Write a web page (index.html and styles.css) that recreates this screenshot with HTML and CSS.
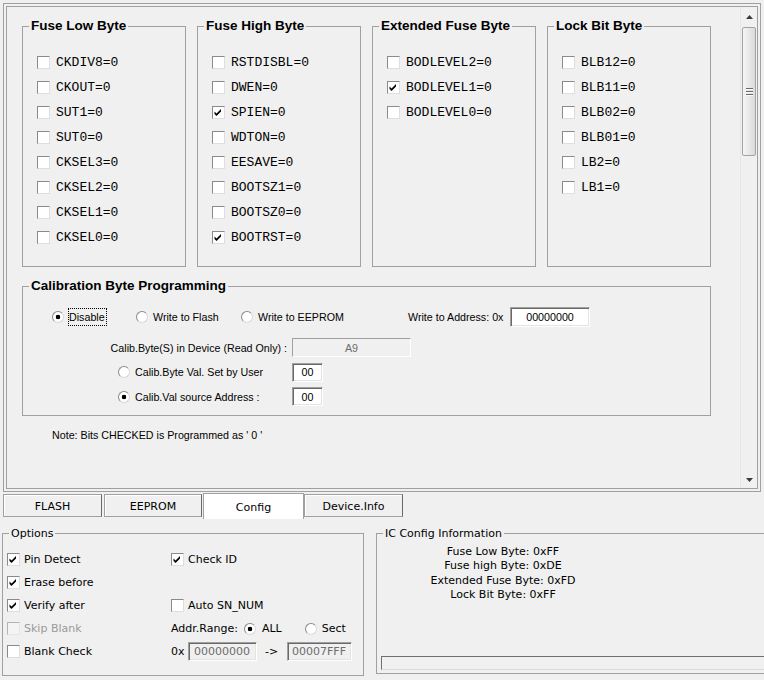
FILE: index.html
```html
<!DOCTYPE html>
<html>
<head>
<meta charset="utf-8">
<title>Config</title>
<link rel="stylesheet" href="styles.css">
</head>
<body>
<div class="frame">
  <div class="pane">
    <div class="fuses">
      <fieldset class="grp">
        <legend>Fuse Low Byte</legend>
        <div class="bit"><span class="cb"></span>CKDIV8=0</div>
        <div class="bit"><span class="cb"></span>CKOUT=0</div>
        <div class="bit"><span class="cb"></span>SUT1=0</div>
        <div class="bit"><span class="cb"></span>SUT0=0</div>
        <div class="bit"><span class="cb"></span>CKSEL3=0</div>
        <div class="bit"><span class="cb"></span>CKSEL2=0</div>
        <div class="bit"><span class="cb"></span>CKSEL1=0</div>
        <div class="bit"><span class="cb"></span>CKSEL0=0</div>
      </fieldset>
      <fieldset class="grp">
        <legend>Fuse High Byte</legend>
        <div class="bit"><span class="cb"></span>RSTDISBL=0</div>
        <div class="bit"><span class="cb"></span>DWEN=0</div>
        <div class="bit"><span class="cb"><svg class="tick" viewBox="0 0 11 11" width="11" height="11"><path d="M1.5 4.5 L3.5 6.5 L8 2 V4.5 L3.5 9 L1.5 7 Z"/></svg></span>SPIEN=0</div>
        <div class="bit"><span class="cb"></span>WDTON=0</div>
        <div class="bit"><span class="cb"></span>EESAVE=0</div>
        <div class="bit"><span class="cb"></span>BOOTSZ1=0</div>
        <div class="bit"><span class="cb"></span>BOOTSZ0=0</div>
        <div class="bit"><span class="cb"><svg class="tick" viewBox="0 0 11 11" width="11" height="11"><path d="M1.5 4.5 L3.5 6.5 L8 2 V4.5 L3.5 9 L1.5 7 Z"/></svg></span>BOOTRST=0</div>
      </fieldset>
      <fieldset class="grp">
        <legend>Extended Fuse Byte</legend>
        <div class="bit"><span class="cb"></span>BODLEVEL2=0</div>
        <div class="bit"><span class="cb"><svg class="tick" viewBox="0 0 11 11" width="11" height="11"><path d="M1.5 4.5 L3.5 6.5 L8 2 V4.5 L3.5 9 L1.5 7 Z"/></svg></span>BODLEVEL1=0</div>
        <div class="bit"><span class="cb"></span>BODLEVEL0=0</div>
      </fieldset>
      <fieldset class="grp">
        <legend>Lock Bit Byte</legend>
        <div class="bit"><span class="cb"></span>BLB12=0</div>
        <div class="bit"><span class="cb"></span>BLB11=0</div>
        <div class="bit"><span class="cb"></span>BLB02=0</div>
        <div class="bit"><span class="cb"></span>BLB01=0</div>
        <div class="bit"><span class="cb"></span>LB2=0</div>
        <div class="bit"><span class="cb"></span>LB1=0</div>
      </fieldset>
    </div>

    <fieldset class="grp calib">
      <legend>Calibration Byte Programming</legend>
      <div class="crow1">
        <div class="opt w-dis"><span class="rb on"></span><span class="focus">Disable</span></div>
        <div class="opt w-flash"><span class="rb"></span>Write to Flash</div>
        <div class="opt w-eep"><span class="rb"></span>Write to EEPROM</div>
        <span class="addr-lbl">Write to Address: 0x</span>
        <span class="inp addr">00000000</span>
      </div>
      <div class="cgrid">
        <span class="ro-lbl">Calib.Byte(S) in Device (Read Only) :</span>
        <span class="inp ro">A9</span>
        <div class="opt ind"><span class="rb"></span>Calib.Byte Val. Set by User</div>
        <span class="inp small">00</span>
        <div class="opt ind"><span class="rb on"></span>Calib.Val source Address :</div>
        <span class="inp small">00</span>
      </div>
    </fieldset>

    <p class="note">Note: Bits CHECKED is Programmed as ' 0 '</p>
  </div>

  <div class="vscroll">
    <div class="sb-btn up"><svg width="7" height="4" viewBox="0 0 7 4"><path d="M0 4 L3.5 0 L7 4 Z" fill="#3a3a3a"/></svg></div>
    <div class="sb-track">
      <div class="thumb">
        <svg width="7" height="8" viewBox="0 0 7 8"><path d="M0 0.5h7M0 3.5h7M0 6.5h7" stroke="#6a6a6a"/><path d="M0 1.5h7M0 4.5h7M0 7.5h7" stroke="#fafafa"/></svg>
      </div>
    </div>
    <div class="sb-btn down"><svg width="7" height="4" viewBox="0 0 7 4"><path d="M0 0 L7 0 L3.5 4 Z" fill="#3a3a3a"/></svg></div>
  </div>
</div>

<div class="tabs">
  <div class="tab t-flash">FLASH</div>
  <div class="tab t-eep">EEPROM</div>
  <div class="tab t-cfg sel">Config</div>
  <div class="tab t-dev">Device.Info</div>
</div>

<div class="page">
  <fieldset class="box opts">
    <legend>Options</legend>
    <div class="ogrid">
      <div class="ck"><span class="cb"><svg class="tick" viewBox="0 0 11 11" width="11" height="11"><path d="M1.5 4.5 L3.5 6.5 L8 2 V4.5 L3.5 9 L1.5 7 Z"/></svg></span>Pin Detect</div>
      <div class="ck"><span class="cb"><svg class="tick" viewBox="0 0 11 11" width="11" height="11"><path d="M1.5 4.5 L3.5 6.5 L8 2 V4.5 L3.5 9 L1.5 7 Z"/></svg></span>Check ID</div>

      <div class="ck"><span class="cb"><svg class="tick" viewBox="0 0 11 11" width="11" height="11"><path d="M1.5 4.5 L3.5 6.5 L8 2 V4.5 L3.5 9 L1.5 7 Z"/></svg></span>Erase before</div>
      <div></div>

      <div class="ck"><span class="cb"><svg class="tick" viewBox="0 0 11 11" width="11" height="11"><path d="M1.5 4.5 L3.5 6.5 L8 2 V4.5 L3.5 9 L1.5 7 Z"/></svg></span>Verify after</div>
      <div class="ck"><span class="cb"></span>Auto SN_NUM</div>

      <div class="ck dis"><span class="cb"></span>Skip Blank</div>
      <div class="ck">Addr.Range:<span class="rb on r-all"></span>ALL<span class="rb r-sect"></span>Sect</div>

      <div class="ck"><span class="cb"></span>Blank Check</div>
      <div class="ck">0x<span class="inp gin gin1">00000000</span><span class="arrow">-&gt;</span><span class="inp gin gin2">00007FFF</span></div>
    </div>
  </fieldset>

  <fieldset class="box icinfo">
    <legend>IC Config Information</legend>
    <div class="iclines">
      <div>Fuse Low Byte: 0xFF</div>
      <div>Fuse high Byte: 0xDE</div>
      <div>Extended Fuse Byte: 0xFD</div>
      <div>Lock Bit Byte: 0xFF</div>
    </div>
    <div class="progress"></div>
  </fieldset>
</div>
</body>
</html>
```

FILE: styles.css
```css
* { box-sizing: border-box; }

html, body {
  margin: 0;
  padding: 0;
}

body {
  width: 764px;
  height: 680px;
  overflow: hidden;
  background: #f0f0f0;
  font-family: "Liberation Sans", Arial, sans-serif;
  font-size: 11px;
  color: #000;
}

/* ---------- upper scrolling panel ---------- */
.frame {
  margin: 3px 0 0 3px;
  width: 758px;
  height: 489px;
  border: 4px double #a0a0a0;
  display: flex;
}

.pane {
  flex: 1;
  min-width: 0;
  padding: 11px 0 0 15px;
}

.fuses {
  display: grid;
  grid-template-columns: repeat(4, 164px);
  column-gap: 11px;
}

.grp {
  margin: 0;
  padding: 0;
  min-width: 0;
  border: 1px solid #a0a0a0;
}

.grp legend {
  font: bold 13.5px/16px "Liberation Sans", Arial, sans-serif;
  margin-left: 6px;
  padding: 0 2px;
}

.fuses .grp {
  padding: 16px 0 16px 0;
}

.bit {
  height: 25px;
  margin-left: 14px;
  display: flex;
  align-items: center;
  font: 13px "Liberation Mono", "Courier New", monospace;
}

.cb {
  width: 13px;
  height: 13px;
  flex: none;
  display: flex;
  background: #fff;
  border: 1px solid;
  border-color: #8a8a8a #dedede #dedede #8a8a8a;
  margin-right: 6px;
}

.tick { display: block; fill: #000; }

.rb {
  width: 12px;
  height: 12px;
  flex: none;
  border-radius: 50%;
  border: 1px solid;
  border-color: #8a8a8a #d8d8d8 #d8d8d8 #8a8a8a;
  background: #fff;
  margin-right: 5px;
}

.rb.on {
  background: radial-gradient(circle at center, #000 0 2px, #fff 2.6px);
}

/* calibration */
.calib {
  width: 689px;
  margin-top: 11px;
  padding: 13px 0 9px 0;
  font-size: 10.7px;
}

.crow1 {
  display: flex;
  align-items: center;
  height: 20px;
  margin-left: 29px;
}

.opt {
  display: flex;
  align-items: center;
}

.w-dis { width: 84px; }
.w-flash { width: 105px; }
.w-eep { width: 167px; }

.focus {
  border: 1px dotted #000;
  line-height: 16px;
  padding-right: 1px;
  margin-left: -1px;
}

.addr-lbl {
  width: 102px;
  flex: none;
}

.inp {
  display: flex;
  align-items: center;
  justify-content: center;
  background: #fff;
  border: 1px solid;
  border-color: #a0a0a0 #fff #fff #a0a0a0;
  box-shadow: inset 1px 1px 0 #696969, inset -1px -1px 0 #e3e3e3;
}

.addr { width: 80px; height: 20px; }

.cgrid {
  display: grid;
  grid-template-columns: 235px auto;
  grid-auto-rows: 19px;
  column-gap: 5px;
  row-gap: 5.5px;
  margin: 11px 0 0 29px;
  align-items: center;
  justify-items: start;
}

.ro-lbl { justify-self: end; }

.inp.ro {
  width: 119px;
  height: 19px;
  background: #f0f0f0;
  color: #6d6d6d;
  box-shadow: none;
  border-color: #a0a0a0 #fff #fff #a0a0a0;
}

.inp.small { width: 31px; height: 19px; }

.ind { margin-left: 66px; }

.note {
  margin: 13px 0 0 30px;
  line-height: 13px;
  font-size: 10.7px;
}

/* scrollbar */
.vscroll {
  width: 17px;
  flex: none;
  display: flex;
  flex-direction: column;
  border-left: 1px solid #e6e6e6;
}

.sb-btn {
  display: flex;
  align-items: center;
  justify-content: center;
}

.sb-btn.up { height: 19px; }
.sb-btn.down { height: 17px; }
.sb-btn svg { display: block; }

.sb-track {
  flex: 1;
  padding: 1px 1px 0 1px;
}

.thumb {
  height: 129px;
  border: 1px solid #a3a3a3;
  border-radius: 2px;
  background: linear-gradient(to right, #f5f5f5, #dadada);
  display: flex;
  align-items: center;
  justify-content: center;
}

.thumb svg { display: block; }

/* ---------- tabs ---------- */
.tabs {
  display: flex;
  align-items: flex-start;
  height: 25px;
  margin-top: 2px;
  font-family: "DejaVu Sans", Tahoma, sans-serif;
  font-size: 11px;
}

.tab {
  height: 23px;
  display: flex;
  align-items: center;
  justify-content: center;
  padding-top: 1px;
  background: #f0f0f0;
  border: 1px solid #a0a0a0;
  border-right-color: #696969;
  box-shadow: inset 1px 1px 0 #fff;
}

.t-flash { margin-left: 3px; width: 99px; }
.t-eep { margin-left: 2px; width: 98px; }
.t-cfg { margin-left: 1px; width: 101px; }
.t-dev { width: 99px; }

.tab.sel {
  height: 26px;
  margin-top: -1px;
  background: #fff;
  border-bottom: none;
  border-right-color: #a0a0a0;
  box-shadow: none;
  padding-top: 2px;
}

/* ---------- tab page ---------- */
.page {
  display: flex;
  align-items: flex-start;
  gap: 12px;
  padding: 8px 0 0 2px;
  font-family: "DejaVu Sans", Tahoma, sans-serif;
  font-size: 11px;
}

.box {
  margin: 0;
  min-width: 0;
  border: 1px solid #a0a0a0;
}

.box legend {
  line-height: 13px;
  padding: 0 2px;
  margin-left: 6px;
}

.opts {
  width: 362px;
  flex: none;
  padding: 8px 0 12px 0;
}

.ogrid {
  display: grid;
  grid-template-columns: 164px 1fr;
  grid-auto-rows: 23px;
  margin-left: 4px;
}

.ck {
  display: flex;
  align-items: center;
  white-space: nowrap;
}

.ck .cb { margin-right: 4px; }

.ck.dis { color: #9a9a9a; }
.ck.dis .cb {
  background: #f4f4f4;
  border-color: #b4b4b4 #e6e6e6 #e6e6e6 #b4b4b4;
}

.r-all { margin-left: 6px; margin-right: 6px; }
.r-sect { margin-left: 23px; margin-right: 5px; }

.inp.gin {
  height: 19px;
  background: #f0f0f0;
  color: #6d6d6d;
}

.gin1 { width: 69px; margin-left: 3px; }
.gin2 { width: 65px; }

.arrow {
  width: 30px;
  text-align: center;
}

.icinfo {
  width: 420px;
  flex: none;
  padding: 5px 0 3px 0;
}

.iclines {
  width: 252px;
  text-align: center;
  line-height: 14.3px;
}

.progress {
  margin: 54px 0 0 4px;
  width: 400px;
  height: 14px;
  border: 1px solid;
  border-color: #707070 #dcdcdc #dcdcdc #707070;
  background: #f0f0f0;
}
```
